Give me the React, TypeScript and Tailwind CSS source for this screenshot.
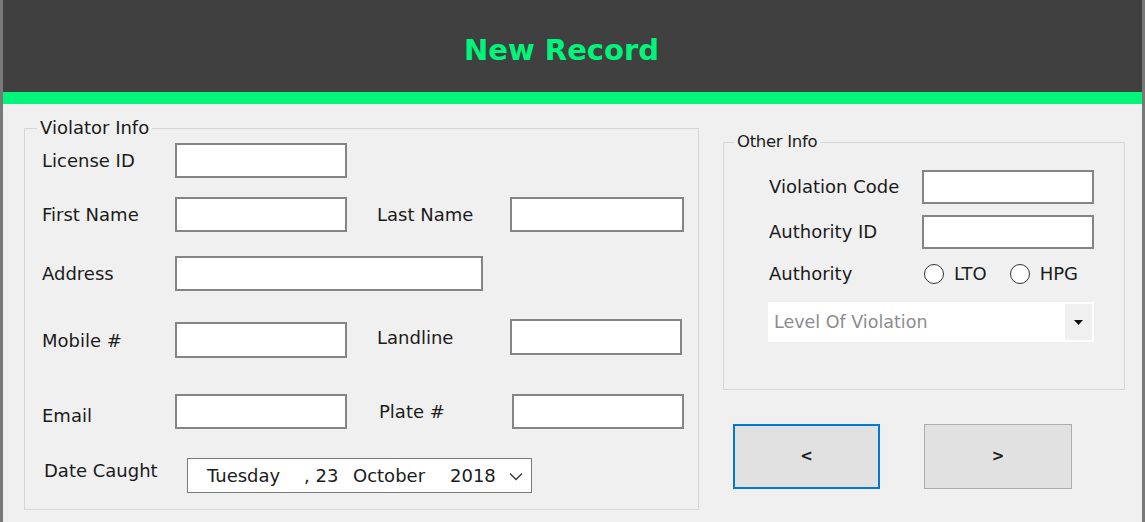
import React from "react";

const font = { fontFamily: '"DejaVu Sans", "Liberation Sans", sans-serif' };

function Input({ className = "" }: { className?: string }) {
  return <div className={`bg-white border-2 border-[#858585] ${className}`} />;
}

function Radio({ label }: { label: string }) {
  return (
    <div className="flex items-center">
      <div className="w-[20px] h-[20px] rounded-full border-[1.5px] border-[#333] bg-white" />
      <span className="ml-[10px] leading-[20px]">{label}</span>
    </div>
  );
}

export default function App() {
  return (
    <div
      style={font}
      className="w-[1145px] h-[522px] overflow-hidden border-x-[3px] border-[#787878] bg-[#f0f0f0] text-[18px] text-[#1b1b1b] flex flex-col"
    >
      <div className="h-[92px] bg-[#404040] flex items-center justify-center pr-[22px] pt-[8px]">
        <h1 className="text-[29px] font-bold text-[#00f57a] leading-none">New Record</h1>
      </div>
      <div className="h-[12px] bg-[#00f57a]" />

      <div className="flex items-start pl-[21px] gap-[24px]">
        {/* Violator Info */}
        <fieldset className="mt-[14px] w-[675px] border border-[#d6d6d6] pl-[17px] pb-[16px]">
          <legend className="ml-[-5px] px-[3px] leading-[20px]">Violator Info</legend>

          <div className="flex items-center mt-[5px] h-[35px]">
            <span className="w-[133px] leading-[20px]">License ID</span>
            <Input className="w-[172px] h-[35px]" />
          </div>

          <div className="flex items-center mt-[19px] h-[35px]">
            <span className="w-[133px] leading-[20px]">First Name</span>
            <Input className="w-[172px] h-[35px]" />
            <span className="ml-[30px] w-[133px] leading-[20px]">Last Name</span>
            <Input className="w-[174px] h-[35px]" />
          </div>

          <div className="flex items-center mt-[24px] h-[35px]">
            <span className="w-[133px] leading-[20px]">Address</span>
            <Input className="w-[308px] h-[35px]" />
          </div>

          <div className="flex items-start mt-[28px] h-[39px]">
            <span className="w-[133px] mt-[12px] leading-[20px]">Mobile #</span>
            <Input className="w-[172px] h-[36px] mt-[3px]" />
            <span className="ml-[30px] w-[133px] mt-[9px] leading-[20px]">Landline</span>
            <Input className="w-[172px] h-[36px]" />
          </div>

          <div className="flex items-start mt-[36px] h-[35px]">
            <span className="w-[133px] mt-[12px] leading-[20px]">Email</span>
            <Input className="w-[172px] h-[35px]" />
            <span className="ml-[32px] w-[133px] mt-[8px] leading-[20px]">Plate #</span>
            <Input className="w-[172px] h-[35px]" />
          </div>

          <div className="flex items-start mt-[29px] h-[35px]">
            <span className="ml-[2px] w-[143px] mt-[3px] leading-[20px]">Date Caught</span>
            <div className="w-[345px] h-[35px] bg-white border border-[#7a7a7a] flex items-center pl-[19px] leading-[20px]">
              <span className="w-[97px]">Tuesday</span>
              <span className="w-[49px]">, 23</span>
              <span className="w-[97px]">October</span>
              <span className="w-[59px]">2018</span>
              <svg width="14" height="9" viewBox="0 0 14 9" className="mt-[2px]">
                <path d="M1 1.5 L7 7.5 L13 1.5" fill="none" stroke="#333" strokeWidth="1.3" />
              </svg>
            </div>
          </div>
        </fieldset>

        {/* Right column */}
        <div className="flex flex-col">
          <fieldset className="mt-[28px] w-[402px] border border-[#d6d6d6] pl-[45px] pb-[47px]">
            <legend className="ml-[-35px] px-[3px] leading-[20px] text-[16.5px] tracking-[-0.3px]">Other Info</legend>

            <div className="flex items-center mt-[18px] h-[34px]">
              <span className="w-[153px] leading-[20px]">Violation Code</span>
              <Input className="w-[172px] h-[34px]" />
            </div>

            <div className="flex items-center mt-[11px] h-[34px]">
              <span className="w-[153px] leading-[20px]">Authority ID</span>
              <Input className="w-[172px] h-[34px]" />
            </div>

            <div className="flex items-center mt-[15px] h-[20px]">
              <span className="w-[155px] leading-[20px]">Authority</span>
              <Radio label="LTO" />
              <div className="ml-[23px]">
                <Radio label="HPG" />
              </div>
            </div>

            <div className="mt-[18px] ml-[-1px] w-[326px] h-[40px] bg-white flex items-center justify-between p-[2px]">
              <span className="pl-[4px] text-[#8c8c8c] leading-[20px] text-[17.5px]">Level Of Violation</span>
              <div className="w-[27px] h-full bg-[#f0f0f0] flex items-center justify-center">
                <svg width="9" height="5" viewBox="0 0 9 5">
                  <path d="M0 0 H9 L4.5 5 Z" fill="#111" />
                </svg>
              </div>
            </div>
          </fieldset>

          <div className="flex mt-[34px] ml-[10px] gap-[44px]">
            <button className="w-[147px] h-[65px] bg-[#e1e1e1] border-2 border-[#0078d7] text-[15px] font-bold text-[#222] flex items-center justify-center">
              &lt;
            </button>
            <button className="w-[148px] h-[65px] bg-[#e1e1e1] border border-[#adadad] text-[15px] font-bold text-[#222] flex items-center justify-center">
              &gt;
            </button>
          </div>
        </div>
      </div>
    </div>
  );
}
